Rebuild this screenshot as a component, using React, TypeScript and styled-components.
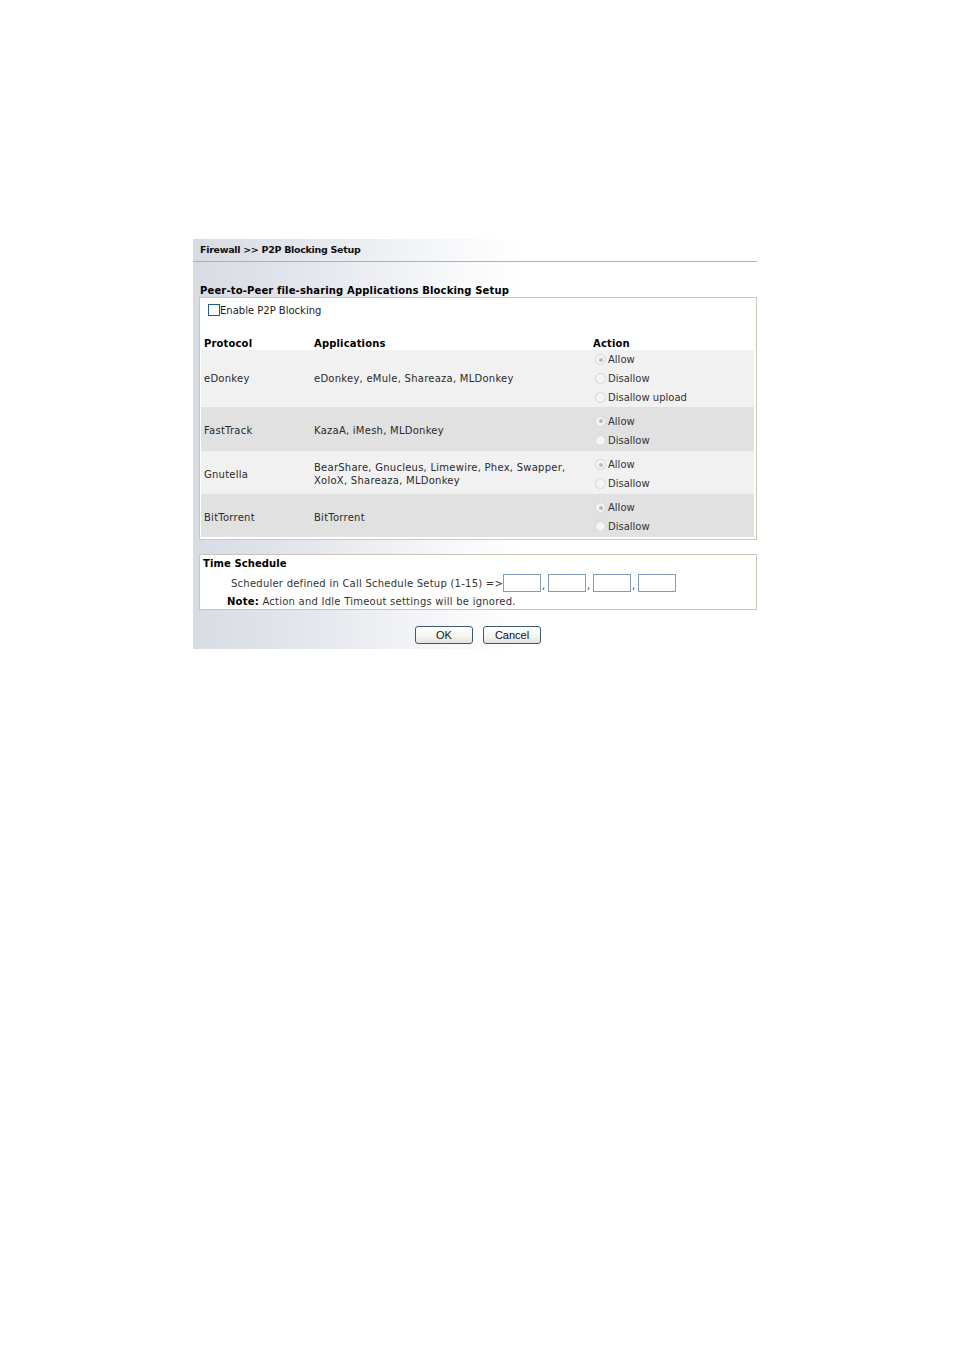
import React from "react";
import styled, { createGlobalStyle } from "styled-components";

const Global = createGlobalStyle`
  html, body { margin: 0; padding: 0; background: #fff; }
  body { font-family: "DejaVu Sans", Verdana, sans-serif; font-size: 10px; color: #222; }
  * { box-sizing: border-box; }
`;

const Panel = styled.div`
  margin: 239px 0 0 193px;
  width: 564px;
  height: 410px;
  background: linear-gradient(to right, #d7dbe3 0px, #e4e7ed 120px, #f6f7f9 250px, #ffffff 330px);
  display: flex;
  flex-direction: column;
`;

const PageTitle = styled.div`
  height: 23px;
  padding: 5px 0 0 7px;
  border-bottom: 1px solid #b3b19c;
  font-weight: bold;
  font-size: 9.5px;
  letter-spacing: -0.3px;
  color: #111;
`;

const SectionTitle = styled.div`
  margin: 22px 0 0 7px;
  height: 13px;
  line-height: 13px;
  font-weight: bold;
  color: #000;
  letter-spacing: 0.15px;
`;

const Box = styled.div`
  margin-left: 6px;
  border: 1px solid #cac7b3;
  background: #fff;
`;

const MainBox = styled(Box)`
  padding: 0 2px 2px 1px;
`;

const CheckRow = styled.label`
  display: flex;
  align-items: center;
  height: 24px;
  padding-left: 7px;
  gap: 0px;
`;

const Check = styled.input`
  appearance: none;
  margin: 0;
  width: 12px;
  height: 12px;
  border: 1px solid #1e5c8c;
  background: #fff;
`;

const Grid = styled.div`
  display: grid;
  grid-template-columns: 110px 279px 1fr;
`;

const HeadRow = styled(Grid)`
  margin-top: 15px;
  height: 13px;
  line-height: 13px;
  font-weight: bold;
  color: #000;
  padding-left: 3px;
  letter-spacing: 0.15px;
`;

const Row = styled(Grid)<{ $dark?: boolean; $h: number }>`
  background: ${(p) => (p.$dark ? "#e1e1e1" : "#f1f1f1")};
  height: ${(p) => p.$h}px;
  padding: ${(p) => (p.$h > 50 ? "0" : "3px")} 0 0 3px;
  align-items: center;
`;

const Cell = styled.div`
  line-height: 13px;
  letter-spacing: 0.25px;
  color: #2a2a2a;
`;

const Actions = styled.div`
  display: flex;
  flex-direction: column;
`;

const RadioLine = styled.label`
  display: flex;
  align-items: center;
  height: 19px;
  gap: 2px;
  color: #333;
`;

const Radio = styled.input`
  appearance: none;
  margin: 0 0 0 2px;
  width: 11px;
  height: 11px;
  border-radius: 50%;
  border: 1px solid #d6d6d6;
  background: #f4f4f4;
  position: relative;
  &:checked::after {
    content: "";
    position: absolute;
    left: 2.5px;
    top: 2.5px;
    width: 4px;
    height: 4px;
    border-radius: 50%;
    background: #b8b8b8;
  }
`;

const ScheduleBox = styled(Box)`
  margin-top: 14px;
  height: 56px;
  padding: 2px 0 0 3px;
`;

const BoxTitle = styled.div`
  font-weight: bold;
  color: #000;
  height: 14px;
  line-height: 14px;
  letter-spacing: 0.1px;
`;

const SchedLine = styled.div`
  display: flex;
  align-items: center;
  height: 20px;
  margin-top: 2px;
  padding-left: 28px;
  color: #333;
  letter-spacing: 0.24px;
`;

const SchedInput = styled.input`
  width: 38px;
  height: 18px;
  margin: 0;
  border: 1px solid #7f9db9;
  background: #fff;
  padding: 0;
`;

const Comma = styled.span`
  width: 7px;
  padding-left: 1px;
  align-self: flex-end;
  line-height: 14px;
`;

const Note = styled.div`
  padding-left: 24px;
  margin-top: 2px;
  height: 14px;
  line-height: 14px;
  color: #333;
  letter-spacing: 0.24px;
  b { color: #000; }
`;

const ButtonRow = styled.div`
  margin: 16px 0 0 6px;
  display: flex;
  justify-content: center;
  gap: 10px;
`;

const Button = styled.button`
  width: 58px;
  height: 18px;
  padding: 0;
  border: 1px solid #3e5a73;
  border-radius: 3px;
  background: linear-gradient(to bottom, #ffffff 0%, #f4f4f0 60%, #e2e2dc 100%);
  font-family: "Liberation Sans", Arial, sans-serif;
  font-size: 11px;
  color: #111;
`;

type P = { name: string; apps: string[]; actions: string[]; dark?: boolean; h: number };

const rows: P[] = [
  { name: "eDonkey", apps: ["eDonkey, eMule, Shareaza, MLDonkey"], actions: ["Allow", "Disallow", "Disallow upload"], h: 57 },
  { name: "FastTrack", apps: ["KazaA, iMesh, MLDonkey"], actions: ["Allow", "Disallow"], dark: true, h: 44 },
  { name: "Gnutella", apps: ["BearShare, Gnucleus, Limewire, Phex, Swapper,", "XoloX, Shareaza, MLDonkey"], actions: ["Allow", "Disallow"], h: 43 },
  { name: "BitTorrent", apps: ["BitTorrent"], actions: ["Allow", "Disallow"], dark: true, h: 43 },
];

export default function App() {
  return (
    <>
      <Global />
      <Panel>
        <PageTitle>Firewall &gt;&gt; P2P Blocking Setup</PageTitle>
        <SectionTitle>Peer-to-Peer file-sharing Applications Blocking Setup</SectionTitle>
        <MainBox>
          <CheckRow>
            <Check type="checkbox" />
            <span>Enable P2P Blocking</span>
          </CheckRow>
          <HeadRow>
            <span>Protocol</span>
            <span>Applications</span>
            <span>Action</span>
          </HeadRow>
          {rows.map((r) => (
            <Row key={r.name} $dark={r.dark} $h={r.h}>
              <Cell>{r.name}</Cell>
              <Cell>
                {r.apps.map((a) => (
                  <div key={a}>{a}</div>
                ))}
              </Cell>
              <Actions>
                {r.actions.map((a, i) => (
                  <RadioLine key={a}>
                    <Radio type="radio" name={r.name} disabled defaultChecked={i === 0} />
                    <span>{a}</span>
                  </RadioLine>
                ))}
              </Actions>
            </Row>
          ))}
        </MainBox>
        <ScheduleBox>
          <BoxTitle>Time Schedule</BoxTitle>
          <SchedLine>
            <span>Scheduler defined in Call Schedule Setup (1-15) =&gt;</span>
            <SchedInput />
            <Comma>,</Comma>
            <SchedInput />
            <Comma>,</Comma>
            <SchedInput />
            <Comma>,</Comma>
            <SchedInput />
          </SchedLine>
          <Note>
            <b>Note:</b> Action and Idle Timeout settings will be ignored.
          </Note>
        </ScheduleBox>
        <ButtonRow>
          <Button>OK</Button>
          <Button>Cancel</Button>
        </ButtonRow>
      </Panel>
    </>
  );
}
